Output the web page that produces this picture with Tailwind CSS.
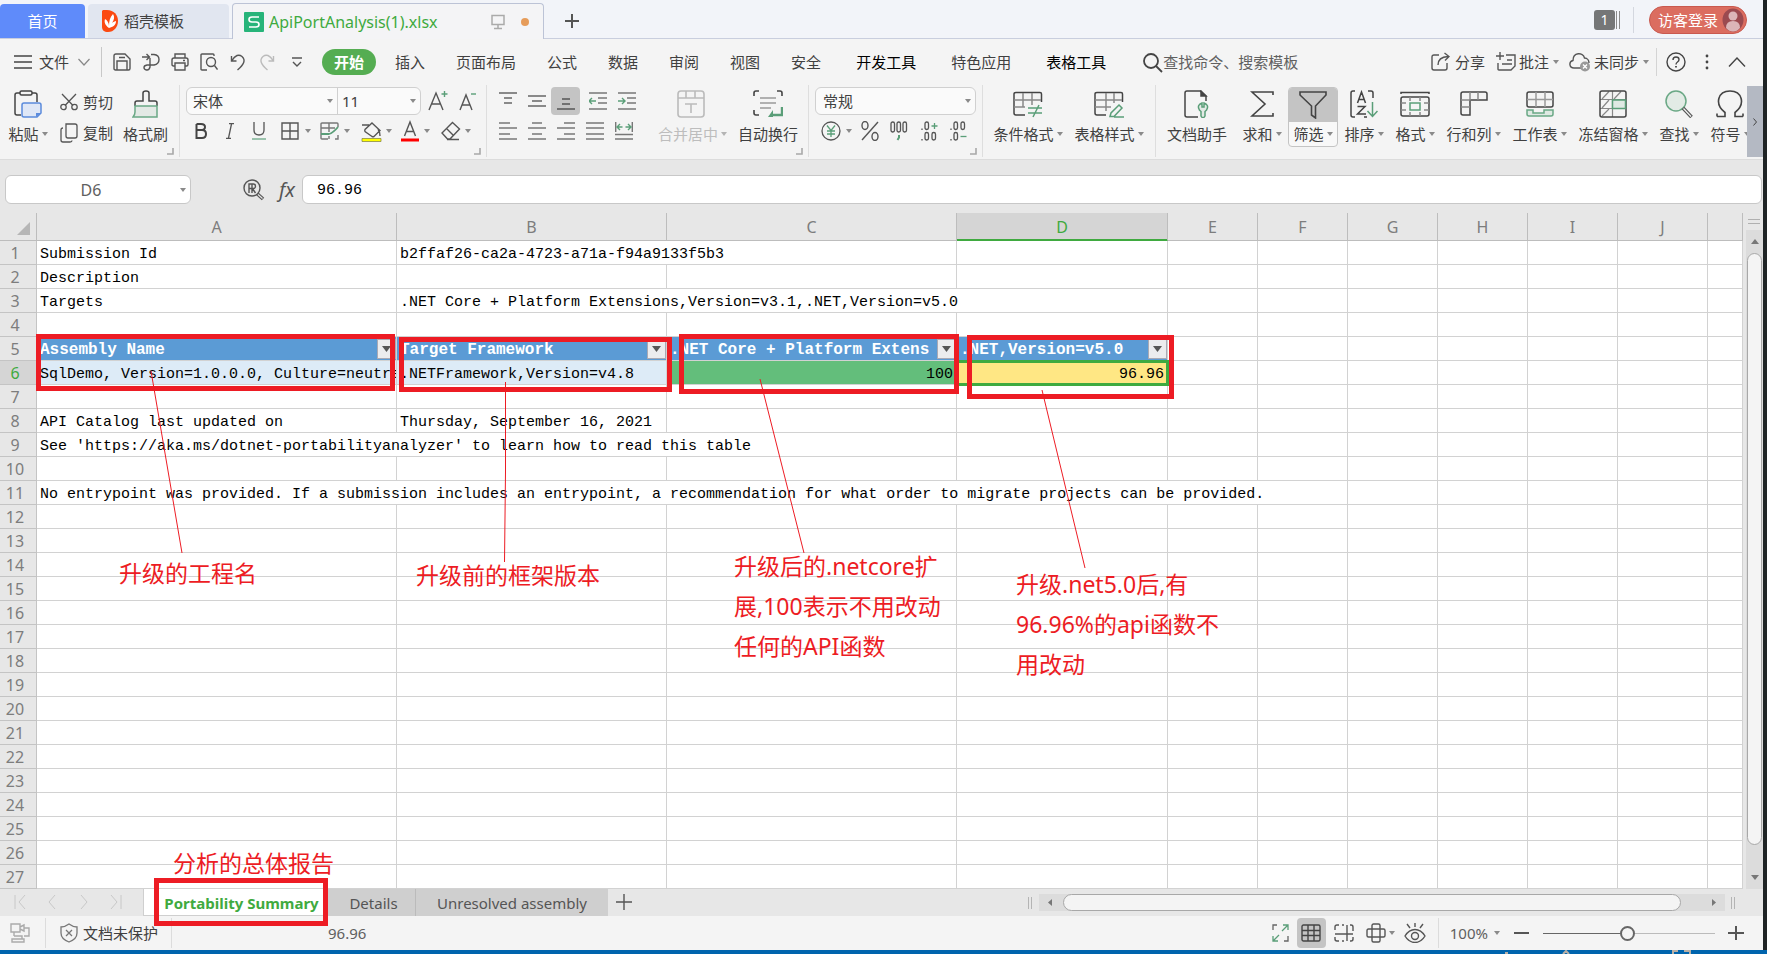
<!DOCTYPE html>
<html lang="zh-CN">
<head>
<meta charset="utf-8">
<title>ApiPortAnalysis(1).xlsx</title>
<script src="https://cdn.jsdelivr.net/npm/@tailwindcss/browser@4"></script>
</head>
<body class="flex h-screen flex-col overflow-hidden bg-[#0064ad] font-['Noto_Sans','Noto_Sans_CJK_SC',sans-serif] text-[15px] leading-5 text-[#404040]">
<svg class="hidden">
  <symbol id="caret" viewBox="0 0 6 4"><path d="M0 0h6L3 4z" fill="#8a8a8a"/></symbol>
  <symbol id="corner" viewBox="0 0 7 7"><path d="M6 0v6H0" fill="none" stroke="#a8a8a8" stroke-width="1.6"/></symbol>
</svg>

<div class="flex min-h-0 flex-1 bg-[#1f2425] pr-1">
<div class="relative flex min-w-0 flex-1 flex-col bg-[#f4f4f4]">

  <!-- Document tabs -->
  <header class="flex h-[39px] shrink-0 items-end border-b border-[#c9cede] bg-[#f2f4f9]">
    <button class="h-[34px] w-[85px] rounded-t bg-[#5f8bfa] text-white">首页</button>
    <button class="ml-[3px] flex h-[34px] w-[141px] items-center gap-[6px] rounded-t bg-[#e1e6f0] pl-[14px]">
      <svg class="h-[22px] w-4" viewBox="0 0 16 22"><path d="M1 0h4c7 0 11 5 11 11s-4 11-10 11C2 22 0 20 0 17V1z" fill="#fb4a12"/><path d="M7 18C3 15 2 12 3 9c2 1 4 4 4 7 0-5 1-9 4-12 2 3 1 6-1 9 1-1 3-2 4-2 0 4-3 6-7 7z" fill="#fff"/></svg>
      <span>稻壳模板</span>
    </button>
    <div class="-mb-px ml-[3px] flex h-[36px] w-[312px] items-center rounded-t border border-b-0 border-[#bcc3d6] bg-[#f4f4f6] pl-[11px] text-base text-[#3faa40]">
      <svg class="h-5 w-5" viewBox="0 0 20 20"><rect width="20" height="20" rx="1" fill="#27b47a"/><path d="M15 5H8Q5 5 5 7.500T8 10h4q3 0 3 2.500T12 15H5" fill="none" stroke="#fff" stroke-width="1.600"/></svg>
      <span class="ml-[5px] w-[222px]">ApiPortAnalysis(1).xlsx</span>
      <svg class="h-4 w-[14px]" viewBox="0 0 14 16" fill="none" stroke="#aaa" stroke-width="1.500"><path d="M1 1.500h12v9H1zM7 11v3M3 14.500h8"/></svg>
      <span class="ml-4 h-2 w-2 rounded-full bg-[#e69c5a]"></span>
    </div>
    <button class="ml-5 h-[34px] w-4" aria-label="新建标签"><svg class="h-4 w-4" viewBox="0 0 16 16" stroke="#555" stroke-width="2"><path d="M8 1v14M1 8h14"/></svg></button>
    <div class="ml-auto flex h-full items-center pr-4 pt-0.5">
      <span class="h-5 w-[21px] rounded-[3px] bg-[#757677] text-center text-sm leading-5 text-white">1</span>
      <span class="ml-px h-[18px] w-1 border-x border-[#8a8a8a]"></span>
      <span class="ml-[13px] h-[26px] w-px bg-[#d4d7df]"></span>
      <button class="ml-[15px] flex h-[28px] w-[98px] items-center rounded-full border border-[#c9594f] bg-[#db6d60] pl-2 text-white">
        <span class="whitespace-nowrap">访客登录</span>
        <svg class="ml-1 h-6 w-[22px] shrink-0" viewBox="0 0 22 24"><ellipse cx="11" cy="12" rx="10.500" ry="11.500" fill="#9b4a50"/><circle cx="11" cy="8" r="4.500" fill="#dbb5b8"/><path d="M4 20q0-7 7-7t7 7q-3 3.500-7 3.500T4 20z" fill="#dbb5b8"/></svg>
      </button>
    </div>
  </header>

  <!-- Menu bar -->
  <nav class="flex h-[46px] shrink-0 items-center whitespace-nowrap pl-[14px]">
    <button class="flex items-center"><svg class="h-4 w-[18px]" viewBox="0 0 18 16" stroke="#444" stroke-width="1.400"><path d="M0 2h18M0 8h18M0 14h18"/></svg><span class="ml-[7px]">文件</span>
    <svg class="ml-[9px] h-2 w-3" viewBox="0 0 12 8" fill="none" stroke="#888" stroke-width="1.200"><path d="M.5 1L6 7l5.500-6"/></svg></button>
    <span class="ml-[11px] h-[30px] w-px bg-[#c8c8c8]"></span>
    <div class="ml-[11px] flex gap-[11px]">
      <button aria-label="保存"><svg class="h-[18px] w-[18px]" viewBox="0 0 18 18" fill="none" stroke="#555" stroke-width="1.400"><path d="M3 1h9l5 5v9.500q0 1.500-1.500 1.500h-13Q1 17 1 15.500V3q0-2 2-2zM4 17V8h10v9M6 4.500h6"/></svg></button>
      <button aria-label="输出为PDF"><svg class="h-[18px] w-[18px]" viewBox="0 0 18 18" fill="none" stroke="#555" stroke-width="1.400"><path d="M0 4h7M4.500 1L7.500 4l-3 3M9 1.500h3Q17 2 17 6.500T12 12H5q-3 .5-3 2.500T4.500 17 8 14V5"/></svg></button>
      <button aria-label="打印"><svg class="h-[18px] w-[18px]" viewBox="0 0 18 18" fill="none" stroke="#555" stroke-width="1.400"><path d="M4 5V1h10v4M4 13H2.500Q1 13 1 11.500V7q0-2 2-2h12q2 0 2 2v4.500q0 1.500-1.500 1.500H14M4 10h10v7H4zM12 7.500h2"/></svg></button>
      <button aria-label="打印预览"><svg class="h-[18px] w-[18px]" viewBox="0 0 18 18" fill="none" stroke="#555" stroke-width="1.400"><path d="M7 17H2q-1 0-1-1V2q0-1 1-1h11q1 0 1 1v1M14.500 12.500l3 4"/><circle cx="11" cy="9" r="4.500"/></svg></button>
      <button aria-label="撤销"><svg class="h-[18px] w-[18px]" viewBox="0 0 18 18" fill="none" stroke="#555" stroke-width="1.400"><path d="M2.500 3v5h5M3 7.500C6 2 10 1 13 3.500c4 3.500 2 8-4.500 13.500"/></svg></button>
      <button aria-label="恢复"><svg class="h-[18px] w-[18px]" viewBox="0 0 18 18" fill="none" stroke="#bbb" stroke-width="1.400"><path d="M15.500 3v5h-5M15 7.500C12 2 8 1 5 3.500 1 7 3 11.500 9.500 17"/></svg></button>
    </div>
    <button class="ml-[16px]" aria-label="更多"><svg class="h-3 w-[10px]" viewBox="0 0 10 12" fill="none" stroke="#555" stroke-width="1.400"><path d="M0 2h10M1 6l4 4 4-4"/></svg></button>
    <button class="ml-5 h-[26px] w-[54px] rounded-full bg-[#55ad52] font-bold text-white">开始</button>
    <div class="ml-[19px] flex gap-[31px]"><a href="#">插入</a><a href="#">页面布局</a><a href="#">公式</a><a href="#">数据</a><a href="#">审阅</a><a href="#">视图</a><a href="#">安全</a></div>
    <div class="ml-[35px] flex gap-[35px]"><a href="#" class="text-black">开发工具</a><a href="#">特色应用</a><a href="#" class="text-black">表格工具</a></div>
    <label class="ml-[37px] flex items-center">
      <svg class="h-[21px] w-5" viewBox="0 0 20 21" fill="none" stroke="#444" stroke-width="1.800"><circle cx="8" cy="9" r="7"/><path d="M13 14l6 6"/></svg>
      <input class="w-[150px] bg-transparent outline-none placeholder:text-[#606060]" placeholder="查找命令、搜索模板">
    </label>
    <div class="ml-auto flex items-center pr-[17px]">
      <button class="flex items-center gap-[5px]"><svg class="h-5 w-[19px]" viewBox="0 0 19 20" fill="none" stroke="#555" stroke-width="1.400"><path d="M8 3H3Q1 3 1 5v11q0 2 2 2h11q2 0 2-2v-5M7 13q0-8 10-8.500M13.500 1L18 4.500l-4 4"/></svg>分享</button>
      <button class="ml-[11px] flex items-center gap-[3px]"><svg class="h-5 w-5" viewBox="0 0 20 20" fill="none" stroke="#555" stroke-width="1.400"><path d="M4 0v8M0 4h8M10 3h9v11l-4 4H3q-1 0-1-1v-6M11 8h5M6 12h10"/></svg>批注<svg class="ml-px h-1 w-1.5"><use href="#caret"/></svg></button>
      <button class="ml-[10px] flex items-center gap-[3px]"><svg class="h-5 w-[22px]" viewBox="0 0 22 20" fill="none" stroke="#555" stroke-width="1.400"><path d="M12 16H5C0 16-.5 9.500 4 8.500 4 0 14 0 15.500 6c3 0 4.500 2.500 4.500 5"/><circle cx="16" cy="14.500" r="5" fill="#999" stroke="none"/><path d="M14 12.500l4 4M18 12.500l-4 4" stroke="#fff"/></svg>未同步<svg class="ml-px h-1 w-1.5"><use href="#caret"/></svg></button>
      <span class="ml-[7px] h-[28px] w-px bg-[#d4d4d4]"></span>
      <button class="ml-[9px]" aria-label="帮助"><svg class="h-5 w-5" viewBox="0 0 20 20" fill="none" stroke="#444" stroke-width="1.400"><circle cx="10" cy="10" r="9"/><path d="M7 8q0-3 3-3t3 2.500Q13 9 11.500 10T10 12.500"/><path d="M10 14v1.500" stroke-width="1.800"/></svg></button>
      <button class="ml-[19px]" aria-label="更多选项"><svg class="h-4 w-1" viewBox="0 0 4 16" fill="#444"><circle cx="2" cy="2" r="1.400"/><circle cx="2" cy="8" r="1.400"/><circle cx="2" cy="14" r="1.400"/></svg></button>
      <button class="ml-[19px]" aria-label="收起功能区"><svg class="h-[10px] w-[18px]" viewBox="0 0 18 10" fill="none" stroke="#444" stroke-width="1.400"><path d="M1 9.500L9 1l8 8.500"/></svg></button>
    </div>
  </nav>

  <!-- Ribbon -->
  <section class="flex h-[74px] shrink-0 whitespace-nowrap">
    <!-- clipboard -->
    <div class="relative flex h-[72px] w-[180px] shrink-0 border-r border-[#dedede] pl-2">
      <button class="flex w-10 flex-col items-center pt-[5px]">
        <svg class="h-7 w-7" viewBox="0 0 28 28" fill="none" stroke="#444" stroke-width="1.500"><path d="M6 3H3Q1 3 1 5v18q0 2 2 2h4M18 3h3q2 0 2 2v7"/><rect x="6" y="1" width="12" height="4" rx="1.500"/><path d="M10 13h15q2 0 2 2v8l-4 4H10q-2 0-2-2V15q0-2 2-2z" fill="#dfe7f6" stroke="#5b8bdc"/><path d="M22 27v-4h5z" fill="#5b8bdc" stroke="none"/></svg>
        <span class="mt-1.5 flex items-center gap-[3px]">粘贴<svg class="h-1 w-1.5"><use href="#caret"/></svg></span>
      </button>
      <div class="ml-3 flex w-[54px] flex-col pt-[2px]">
        <button class="flex h-[29px] items-center gap-[5px]"><svg class="h-[18px] w-[18px] shrink-0" viewBox="0 0 18 18" fill="none" stroke="#555" stroke-width="1.300"><path d="M2 1l11 11.500M16 1L5 12.500"/><circle cx="3.500" cy="14" r="2.700"/><circle cx="14.500" cy="14" r="2.700"/></svg>剪切</button>
        <button class="mt-[2px] flex h-[29px] items-center gap-[5px]"><svg class="h-5 w-[18px] shrink-0" viewBox="0 0 18 20" fill="none" stroke="#555" stroke-width="1.300"><path d="M6 1h9q2 0 2 2v10q0 2-2 2H8q-2 0-2-2zM3 5Q1 5 1 7v10q0 2 2 2h7q2 0 2-1.500"/></svg>复制</button>
      </div>
      <button class="ml-[9px] flex w-[45px] flex-col items-center pt-[5px]">
        <svg class="h-7 w-7" viewBox="0 0 28 28" fill="none" stroke="#444" stroke-width="1.500"><path d="M3 16v-3q0-2 2-2h6V3q0-2 3-2t3 2v8h6q2 0 2 2v3"/><path d="M3 16h22v11H1q2-2 2-5z" fill="#e3e9e5" stroke="#6aa885"/></svg>
        <span class="mt-1.5">格式刷</span>
      </button>
      <svg class="absolute bottom-[2px] right-[5px] h-[7px] w-[7px]"><use href="#corner"/></svg>
    </div>

    <!-- font -->
    <div class="relative flex h-[72px] w-[307px] shrink-0 flex-col border-r border-[#dedede] pl-1.5 pt-[2px]">
      <div class="flex items-center">
        <div class="flex h-7 w-[235px] items-center rounded-md border border-[#d0d0d0] bg-[#fafafa]">
          <select aria-label="字体" class="w-[140px] appearance-none bg-transparent pl-1.5 outline-none"><option>宋体</option></select>
          <svg class="h-1 w-1.5"><use href="#caret"/></svg>
          <span class="ml-1 h-full w-px bg-[#d0d0d0]"></span>
          <select aria-label="字号" class="w-[72px] appearance-none bg-transparent pl-1 outline-none"><option>11</option></select>
          <svg class="h-1 w-1.5"><use href="#caret"/></svg>
        </div>
        <button class="ml-[7px]" aria-label="增大字号"><svg class="h-5 w-5" viewBox="0 0 20 20" fill="none" stroke="#555" stroke-width="1.400"><path d="M1 19L8 2l7 17M3.500 13h9"/><path d="M16.500 0v6M13.500 3h6" stroke="#5a9e78"/></svg></button>
        <button class="ml-[10px]" aria-label="减小字号"><svg class="h-5 w-5" viewBox="0 0 20 20" fill="none" stroke="#555" stroke-width="1.400"><path d="M2 19L8 4l6 15M4 14h8"/><path d="M13 3h5" stroke="#5a9e78"/></svg></button>
      </div>
      <div class="mt-[2px] flex h-7 items-center">
        <button class="flex w-[29px] justify-center" aria-label="加粗"><svg class="h-4 w-3" viewBox="0 0 12 16" fill="none" stroke="#444" stroke-width="2"><path d="M1.500 1v14H7q4 0 4-4t-4-4H1.500M1.500 1H6q4 0 4 3T6 7"/></svg></button>
        <button class="flex w-[29px] justify-center" aria-label="倾斜"><svg class="h-4 w-2" viewBox="0 0 8 16" fill="none" stroke="#555" stroke-width="1.300"><path d="M3 .7h5M0 15.300h5M5.500 1l-3 14"/></svg></button>
        <button class="flex w-[29px] justify-center" aria-label="下划线"><svg class="h-[18px] w-[14px]" viewBox="0 0 14 18" fill="none" stroke="#555" stroke-width="1.300"><path d="M2 0v8q0 5 5 5t5-5V0"/><path d="M0 17h14" stroke="#6aa885"/></svg></button>
        <button class="ml-2 flex w-[39px] items-center gap-[6px]" aria-label="边框"><svg class="h-[18px] w-[18px]" viewBox="0 0 18 18" fill="none" stroke="#555" stroke-width="1.400"><path d="M1 1h16v16H1zM9 1v16M1 9h16"/></svg><svg class="h-1 w-1.5"><use href="#caret"/></svg></button>
        <button class="flex w-[41px] items-center gap-[4px]" aria-label="绘图边框"><svg class="h-[18px] w-5 shrink-0" viewBox="0 0 20 18" fill="none" stroke="#777" stroke-width="1.400"><path d="M8 17H2q-1 0-1-1V2q0-1 1-1h15q1 0 1 1v3M1 6h14M9 1v9M15 17h3v-4M9 14v3"/><path d="M1 12h8q4-1 9-7" stroke="#5a9e78" stroke-width="1.800"/></svg><svg class="h-1 w-1.5"><use href="#caret"/></svg></button>
        <button class="flex w-10 items-center gap-[4px]" aria-label="填充颜色"><svg class="h-[22px] w-[21px] shrink-0" viewBox="0 0 21 22" fill="none" stroke="#555" stroke-width="1.400"><path d="M11 3l8 7.500-6 6q-1 .500-2 0l-7-5q-.5-1 0-2L11 3zM1 5h7M17 9q2 3 2 7"/><path d="M1 18.500h19v3H1z" fill="#ff0" stroke="#8a8a4a" stroke-width=".8"/></svg><svg class="h-1 w-1.5"><use href="#caret"/></svg></button>
        <button class="flex w-10 items-center gap-[5px]" aria-label="字体颜色"><svg class="h-[22px] w-[18px]" viewBox="0 0 18 22" fill="none" stroke="#555" stroke-width="1.400"><path d="M3.500 16L9 2l5.500 14M5.500 11.500h7"/><path d="M0 20h18" stroke="#f00" stroke-width="3"/></svg><svg class="h-1 w-1.5"><use href="#caret"/></svg></button>
        <button class="flex w-8 items-center gap-[4px]" aria-label="清除"><svg class="h-5 w-5 shrink-0" viewBox="0 0 20 20" fill="none" stroke="#555" stroke-width="1.400"><path d="M11.500 1.500l7 6.500L9 18H6.500L1 12zM5.500 7.500l7 7M6 18.500h12"/></svg><svg class="h-1 w-1.5"><use href="#caret"/></svg></button>
      </div>
      <svg class="absolute bottom-[2px] right-[5px] h-[7px] w-[7px]"><use href="#corner"/></svg>
    </div>

    <!-- alignment -->
    <div class="relative flex h-[72px] w-[322px] shrink-0 border-r border-[#dedede] pl-1.5">
      <div class="flex w-[148px] flex-col pt-[2px]">
        <div class="flex h-7 items-center">
          <button class="flex w-[29px] justify-center" aria-label="顶端对齐"><svg class="h-[18px] w-[18px]" viewBox="0 0 18 18" stroke="#666" stroke-width="1.400"><path d="M0 1h18M5 6h8M5 11h8"/></svg></button>
          <button class="flex w-[29px] justify-center" aria-label="垂直居中"><svg class="h-[18px] w-[18px]" viewBox="0 0 18 18" stroke="#666" stroke-width="1.400"><path d="M0 4h18M4 9h10M0 14h18"/></svg></button>
          <button class="flex h-7 w-[29px] items-center justify-center rounded bg-[#c4c4c4]" aria-label="底端对齐"><svg class="h-[18px] w-[18px]" viewBox="0 0 18 18" stroke="#555" stroke-width="1.400"><path d="M5 7h8M5 12h8M0 17h18"/></svg></button>
          <button class="ml-[3px] flex w-[29px] justify-center" aria-label="减少缩进"><svg class="h-[18px] w-[18px]" viewBox="0 0 18 18" fill="none" stroke="#777" stroke-width="1.400"><path d="M0 1h18M9 6h9M9 11h9M0 17h18"/><path d="M0 9h7M3 6L0 9l3 3" stroke="#5a9e78"/></svg></button>
          <button class="flex w-[29px] justify-center" aria-label="增加缩进"><svg class="h-[18px] w-[18px]" viewBox="0 0 18 18" fill="none" stroke="#777" stroke-width="1.400"><path d="M0 1h18M9 6h9M9 11h9M0 17h18"/><path d="M0 9h7M4 6l3 3-3 3" stroke="#5a9e78"/></svg></button>
        </div>
        <div class="mt-[2px] flex h-7 items-center">
          <button class="flex w-[29px] justify-center" aria-label="左对齐"><svg class="h-[18px] w-[18px]" viewBox="0 0 18 18" stroke="#777" stroke-width="1.400"><path d="M0 1h11M0 6h18M0 12h11M0 17h18"/></svg></button>
          <button class="flex w-[29px] justify-center" aria-label="水平居中"><svg class="h-[18px] w-[18px]" viewBox="0 0 18 18" stroke="#777" stroke-width="1.400"><path d="M4 1h10M0 6h18M4 12h10M0 17h18"/></svg></button>
          <button class="flex w-[29px] justify-center" aria-label="右对齐"><svg class="h-[18px] w-[18px]" viewBox="0 0 18 18" stroke="#777" stroke-width="1.400"><path d="M7 1h11M0 6h18M7 12h11M0 17h18"/></svg></button>
          <button class="flex w-[29px] justify-center" aria-label="两端对齐"><svg class="h-[18px] w-[18px]" viewBox="0 0 18 18" stroke="#777" stroke-width="1.400"><path d="M0 1h18M0 6h18M0 12h18M0 17h18"/></svg></button>
          <button class="flex w-[29px] justify-center" aria-label="分散对齐"><svg class="h-[18px] w-[18px]" viewBox="0 0 18 18" fill="none" stroke="#777" stroke-width="1.400"><path d="M.7 0v10M17.300 0v10M0 12.500h18M0 17h18"/><path d="M2 5h5.500M5 2L2 5l3 3M16 5h-5.500M13 2l3 3-3 3" stroke="#5a9e78"/></svg></button>
        </div>
      </div>
      <button class="ml-[17px] flex w-[70px] flex-col pt-[5px] text-[#bdbdbd]">
        <svg class="ml-[19px] h-7 w-7" viewBox="0 0 28 28" fill="none" stroke="#bbb" stroke-width="1.600"><rect x="1" y="1" width="26" height="26" rx="3"/><path d="M1 8h26M9 1v7M18 1v7M8 14h12M14 14v9"/></svg>
        <span class="mt-1.5 flex items-center gap-[3px]">合并居中<svg class="h-1 w-1.5 opacity-60"><use href="#caret"/></svg></span>
      </button>
      <button class="ml-[10px] flex w-[60px] flex-col items-center pt-[5px]">
        <svg class="h-7 w-[30px]" viewBox="0 0 30 28" fill="none" stroke="#444" stroke-width="1.600"><path d="M1 6V3q0-2 2-2h3M24 1h3q2 0 2 2v3M1 20v3q0 2 2 2h3"/><path d="M7 8h16M7 13h16M7 18h11" stroke="#999"/><path d="M29 17v8H18" stroke="#5a9e78" stroke-width="2.400"/><path d="M20 20v7h-5z" fill="#5a9e78" stroke="none"/></svg>
        <span class="mt-1.5">自动换行</span>
      </button>
      <svg class="absolute bottom-[2px] right-[5px] h-[7px] w-[7px]"><use href="#corner"/></svg>
    </div>

    <!-- number -->
    <div class="relative flex h-[72px] w-[174px] shrink-0 flex-col border-r border-[#dedede] pl-1.5 pt-[2px]">
      <div class="flex h-7 w-[161px] items-center rounded-md border border-[#d0d0d0] bg-[#fafafa]">
        <select aria-label="数字格式" class="w-[149px] appearance-none bg-transparent pl-[7px] outline-none"><option>常规</option></select>
        <svg class="h-1 w-1.5"><use href="#caret"/></svg>
      </div>
      <div class="mt-[2px] flex h-7 items-center pl-[6px]">
        <button class="flex w-10 items-center gap-[5px]" aria-label="货币格式"><svg class="h-5 w-5" viewBox="0 0 20 20" fill="none" stroke="#555" stroke-width="1.300"><circle cx="10" cy="10" r="9"/><path d="M6 4.500l4 5 4-5M10 9.500V16M6 10h8M6 13h8" stroke="#5a9e78"/></svg><svg class="h-1 w-1.5"><use href="#caret"/></svg></button>
        <button class="w-[29px]" aria-label="百分比"><svg class="h-5 w-[18px]" viewBox="0 0 18 20" fill="none" stroke="#555" stroke-width="1.400"><ellipse cx="4" cy="4.500" rx="3" ry="4"/><ellipse cx="14" cy="15.500" rx="3" ry="4"/><path d="M17 1L1 19"/></svg></button>
        <button class="w-[31px]" aria-label="千位分隔"><svg class="h-5 w-[18px]" viewBox="0 0 18 20" fill="none" stroke="#555" stroke-width="1.300"><rect x="1" y="1" width="3.500" height="10" rx="1.700"/><rect x="7" y="1" width="3.500" height="10" rx="1.700"/><rect x="13" y="1" width="3.500" height="10" rx="1.700"/><path d="M9 14v2.500L7.500 19" stroke="#5a9e78" stroke-width="2"/></svg></button>
        <button class="w-[29px]" aria-label="增加小数位"><svg class="h-5 w-[18px]" viewBox="0 0 18 20" fill="none" stroke="#555" stroke-width="1.300"><rect x="4" y="1" width="3.500" height="7.500" rx="1.700"/><rect x="4" y="11.500" width="3.500" height="7.500" rx="1.700"/><rect x="11" y="11.500" width="3.500" height="7.500" rx="1.700"/><path d="M1 7.500v1.500M1 18v1.500"/><path d="M13.500 2v6M10.500 5h6" stroke="#5a9e78"/></svg></button>
        <button class="w-[18px]" aria-label="减少小数位"><svg class="h-5 w-[18px]" viewBox="0 0 18 20" fill="none" stroke="#555" stroke-width="1.300"><rect x="4" y="1" width="3.500" height="7.500" rx="1.700"/><rect x="11" y="1" width="3.500" height="7.500" rx="1.700"/><rect x="4" y="11.500" width="3.500" height="7.500" rx="1.700"/><path d="M1 7.500v1.500M1 18v1.500"/><path d="M10.500 15.500h6" stroke="#5a9e78"/></svg></button>
      </div>
      <svg class="absolute bottom-[2px] right-[5px] h-[7px] w-[7px]"><use href="#corner"/></svg>
    </div>

    <!-- styles -->
    <div class="flex h-[72px] w-[173px] shrink-0 gap-[11px] border-r border-[#dedede] pl-[10px]">
      <button class="flex w-[70px] flex-col items-center pt-[5px]">
        <svg class="h-7 w-[30px]" viewBox="0 0 30 28" fill="none" stroke="#444" stroke-width="1.500"><path d="M12 25H3q-2 0-2-2V4q0-1.500 2-1.500h24q1.500 0 1.500 1.500v8"/><path d="M1 10h27M1 17h11M10 3v14M19 3v12" stroke="#888"/><path d="M15 18h14M15 23h14M26 15l-6 12" stroke="#5a9e78"/></svg>
        <span class="mt-1.5 flex items-center gap-[3px]">条件格式<svg class="h-1 w-1.5"><use href="#caret"/></svg></span>
      </button>
      <button class="flex w-[70px] flex-col items-center pt-[5px]">
        <svg class="h-7 w-[30px]" viewBox="0 0 30 28" fill="none" stroke="#444" stroke-width="1.500"><path d="M12 25H3q-2 0-2-2V4q0-1.500 2-1.500h24q1.500 0 1.500 1.500v8"/><path d="M1 10h27M1 17h16M12 3v18M20 3v10" stroke="#888"/><path d="M25 15l3 3-8 8.500h-4L17 23zM20 27h10" stroke="#5a9e78"/></svg>
        <span class="mt-1.5 flex items-center gap-[3px]">表格样式<svg class="h-1 w-1.5"><use href="#caret"/></svg></span>
      </button>
    </div>

    <!-- editing -->
    <div class="flex h-[72px] min-w-0 flex-1 gap-[11px] overflow-hidden pl-[11px]">
      <button class="flex w-[60px] shrink-0 flex-col items-center pt-[5px]">
        <svg class="h-7 w-7" viewBox="0 0 28 28" fill="none" stroke="#444" stroke-width="1.500"><path d="M15 27H4q-2 0-2-2V3q0-2 2-2h13l6 5v5"/><path d="M18 1v5h5z" fill="#444"/><path d="M19 13q-5 2-3 6 0 1 2 2.500V26q2 3.500 4 0v-4.500q2-1.500 2-2.500 2-4-3-6v4h-2z" fill="#e3e9e5" stroke="#5a9e78"/></svg>
        <span class="mt-1.5">文档助手</span>
      </button>
      <button class="ml-1 flex w-10 shrink-0 flex-col items-center pt-[5px]">
        <svg class="h-7 w-6" viewBox="0 0 24 28" fill="none" stroke="#444" stroke-width="1.600"><path d="M23 5V2H2l13 12L2 26h21v-3"/></svg>
        <span class="mt-1.5 flex items-center gap-[3px]">求和<svg class="h-1 w-1.5"><use href="#caret"/></svg></span>
      </button>
      <button class="-mx-[5px] mt-[2px] flex h-[60px] w-[50px] shrink-0 flex-col items-center overflow-hidden rounded border border-[#c4c4c4] bg-[#f8f8f8]">
        <span class="flex h-[34px] w-full shrink-0 justify-center bg-[#c4c4c4] pt-[3px]"><svg class="h-7 w-7" viewBox="0 0 28 28" fill="none" stroke="#444" stroke-width="1.600"><path d="M1 1h26v3L16.500 15v12l-4-3v-9L1 4z"/></svg></span>
        <span class="mt-[2px] flex items-center gap-[3px]">筛选<svg class="h-1 w-1.5"><use href="#caret"/></svg></span>
      </button>
      <button class="flex w-10 shrink-0 flex-col items-center pt-[5px]">
        <svg class="h-7 w-7" viewBox="0 0 28 28" fill="none" stroke="#444" stroke-width="1.500"><path d="M5 27H3q-2 0-2-2V3q0-2 2-2h2M18 1h3q2 0 2 2v5M14 27h3M7.500 13L11.500 2l4 11M9 9.500h5M7.500 16.500H15l-7.500 7.500H16"/><path d="M22.500 12v14M17.500 21l5 5.500 5-5.500" stroke="#5a9e78"/></svg>
        <span class="mt-1.5 flex items-center gap-[3px]">排序<svg class="h-1 w-1.5"><use href="#caret"/></svg></span>
      </button>
      <button class="flex w-10 shrink-0 flex-col items-center pt-[5px]">
        <svg class="h-7 w-[30px]" viewBox="0 0 30 28" fill="none" stroke="#444" stroke-width="1.500"><path d="M1 4V2.500h28V4"/><rect x="1" y="7" width="28" height="19" rx="2"/><path d="M1 13h5M24 13h5M1 20h5M24 20h5M10 7v4M20 7v4M10 22v4M20 22v4" stroke="#888"/><rect x="10" y="13" width="10" height="7" stroke="#5a9e78"/></svg>
        <span class="mt-1.5 flex items-center gap-[3px]">格式<svg class="h-1 w-1.5"><use href="#caret"/></svg></span>
      </button>
      <button class="flex w-[55px] shrink-0 flex-col items-center pt-[5px]">
        <svg class="h-7 w-7" viewBox="0 0 28 28" fill="none" stroke="#444" stroke-width="1.500"><path d="M1 4q0-2 2-2h22q2 0 2 2v6H10v15H3q-2 0-2-2z"/><path d="M10 2v8H1M18 2v8M1 17h9" stroke="#888"/></svg>
        <span class="mt-1.5 flex items-center gap-[3px]">行和列<svg class="h-1 w-1.5"><use href="#caret"/></svg></span>
      </button>
      <button class="flex w-[55px] shrink-0 flex-col items-center pt-[5px]">
        <svg class="h-7 w-7" viewBox="0 0 28 28" fill="none" stroke="#444" stroke-width="1.500"><rect x="1" y="2" width="26" height="15" rx="2"/><path d="M1 9.500h26M10 2v15M19 2v15" stroke="#999"/><path d="M1 20h6v3h11v-3h9v4q0 2-2 2H3q-2 0-2-2z" fill="#dfe9e3" stroke="#6aa885"/></svg>
        <span class="mt-1.5 flex items-center gap-[3px]">工作表<svg class="h-1 w-1.5"><use href="#caret"/></svg></span>
      </button>
      <button class="flex w-[70px] shrink-0 flex-col items-center pt-[5px]">
        <svg class="h-7 w-7" viewBox="0 0 28 28" fill="none" stroke="#444" stroke-width="1.500"><path d="M1 9.500h26M13.500 1v26M13.500 18.500h13M1 18.500h12M3 9l7-7.500M15 9l7-7.500M3 18l7-8M3 26l7-7" stroke="#888" stroke-width="1.200"/><rect x="1" y="1" width="26" height="26" rx="2"/><path d="M13.500 10h13v8.500h-13z" fill="#dfe9e3" stroke="#5a9e78"/></svg>
        <span class="mt-1.5 flex items-center gap-[3px]">冻结窗格<svg class="h-1 w-1.5"><use href="#caret"/></svg></span>
      </button>
      <button class="flex w-10 shrink-0 flex-col items-center pt-[5px]">
        <svg class="h-7 w-7" viewBox="0 0 28 28" fill="none" stroke="#555" stroke-width="1.500"><circle cx="11" cy="11" r="10" fill="#e2ebe5" stroke="#6aa885"/><path d="M18 18l8.500 9" stroke-width="3.600"/><path d="M18.500 18.500l7.500 8" stroke="#f4f4f4" stroke-width="1.200"/></svg>
        <span class="mt-1.5 flex items-center gap-[3px]">查找<svg class="h-1 w-1.5"><use href="#caret"/></svg></span>
      </button>
      <button class="flex w-10 shrink-0 flex-col items-center pt-[5px]">
        <svg class="h-7 w-7" viewBox="0 0 28 28" fill="none" stroke="#444" stroke-width="1.600"><path d="M1 26.500h8v-4C-2 14 2 1 14 1s16 13 5 21.500v4h8M1 26.500v-3M27 26.500v-3"/></svg>
        <span class="mt-1.5 flex items-center gap-[3px]">符号<svg class="h-1 w-1.5"><use href="#caret"/></svg></span>
      </button>
    </div>
    <button class="mt-px flex h-[71px] w-4 shrink-0 items-center justify-center bg-[#b4b9c3]" aria-label="向右滚动"><svg class="h-2 w-1" viewBox="0 0 4 8" fill="none" stroke="#444"><path d="M.5.5L3.500 4l-3 3.500"/></svg></button>
  </section>

  <!-- Formula bar -->
  <section class="flex h-[54px] shrink-0 items-center border-t border-[#dcdcdc] bg-[#e7e7e7] pb-[3px] pl-[5px] pr-px pt-[9px]">
    <div class="flex h-[29px] w-[186px] shrink-0 items-center rounded-md border border-[#c8c8c8] bg-white">
      <input aria-label="名称框" value="D6" class="w-[174px] bg-transparent pr-1 text-center text-base text-[#606060] outline-none">
      <svg class="h-1 w-1.5"><use href="#caret"/></svg>
    </div>
    <button class="ml-[52px]" aria-label="查找引用"><svg class="h-[22px] w-[22px]" viewBox="0 0 22 22" fill="none" stroke="#555" stroke-width="1.400"><circle cx="9" cy="9" r="8"/><path d="M6 14V5h4.500q2 0 2 2.200t-2 2.300H6M9.500 9.500l3 4.500M9 5v9"/><path d="M14.500 15l5.500 5" stroke-width="3.600"/><path d="M15 15.500l4.500 4" stroke="#e7e7e7" stroke-width="1.200"/></svg></button>
    <button class="ml-[9px] h-7 w-[26px] italic text-[#555]" aria-label="插入函数"><span class="text-xl leading-6">fx</span></button>
    <input aria-label="编辑栏" value="96.96" class="ml-[2px] h-[29px] min-w-0 flex-1 rounded-md border border-[#c8c8c8] bg-white pl-[14px] pt-[2px] font-['Liberation_Mono',monospace] text-[15px] text-black outline-none">
  </section>

  <!-- Sheet -->
  <main class="flex min-h-0 flex-1 bg-[#e7e7e7]">
    <div class="min-w-0 flex-1">
    <table class="w-full table-fixed border-separate border-spacing-0 bg-white">
      <colgroup><col class="w-[37px]"><col class="w-[360px]"><col class="w-[270px]"><col class="w-[290px]"><col class="w-[211px]"><col class="w-[90px]"><col class="w-[90px]"><col class="w-[90px]"><col class="w-[90px]"><col class="w-[90px]"><col class="w-[90px]"><col></colgroup>
      <thead>
        <tr class="h-7 bg-[#e7e7e7] text-base text-[#7d7d7d] [&>th]:border-b [&>th]:border-r [&>th]:border-[#bdbdbd] [&>th]:p-0 [&>th]:font-normal">
          <th><svg class="ml-[17px] mt-1 h-[13px] w-[13px]" viewBox="0 0 13 13"><path d="M13 0v13H0z" fill="#b6b6b6"/></svg></th><th>A</th><th>B</th><th>C</th>
          <th class="bg-[#d5d5d5] text-[#3faa40] shadow-[inset_0_-1px_0_#3faa40] border-b-[#3faa40]!">D</th><th>E</th><th>F</th><th>G</th><th>H</th><th>I</th><th>J</th><th></th>
        </tr>
      </thead>
      <tbody id="rows" class="whitespace-nowrap font-['Liberation_Mono',monospace] text-[15px] leading-[18px] text-black [&_td]:overflow-hidden [&_td]:border-b [&_td]:border-r [&_td]:border-[#d2d2d2] [&_td]:p-0 [&_td]:pl-[3px] [&_td]:pt-1 [&_th]:border-b [&_th]:border-r [&_th]:border-[#c4c4c4] [&_th]:bg-[#e7e7e7] [&_th]:p-0 [&_th]:pr-[6px] [&_th]:font-['Noto_Sans',sans-serif] [&_th]:text-base [&_th]:font-normal [&_th]:leading-[22px] [&_th]:text-[#7d7d7d]">
        <tr class="h-6"><th>1</th><td>Submission Id</td><td colspan="2">b2ffaf26-ca2a-4723-a71a-f94a9133f5b3</td><td></td><td></td><td></td><td></td><td></td><td></td><td></td><td></td></tr>
        <tr class="h-6"><th>2</th><td>Description</td><td></td><td></td><td></td><td></td><td></td><td></td><td></td><td></td><td></td><td></td></tr>
        <tr class="h-6"><th>3</th><td>Targets</td><td colspan="3">.NET Core + Platform Extensions,Version=v3.1,.NET,Version=v5.0</td><td></td><td></td><td></td><td></td><td></td><td></td><td></td></tr>
        <tr class="h-6"><th>4</th><td></td><td></td><td></td><td></td><td></td><td></td><td></td><td></td><td></td><td></td><td></td></tr>
        <tr class="h-6 [&>td]:pt-0!"><th>5</th>
          <td class="bg-[#5b9bd5]"><div class="flex items-center justify-between text-base font-bold leading-[23px] text-white"><span class="pt-0.5 leading-5">Assembly Name</span><button class="flex h-5 w-[19px] items-center justify-center border border-[#a9a9b4] bg-[#ececee]" aria-label="筛选"><svg class="h-[6px] w-[9px]" viewBox="0 0 9 6"><path d="M0 0h9L4.500 6z" fill="#555"/></svg></button></div></td>
          <td class="bg-[#5b9bd5]"><div class="flex items-center justify-between text-base font-bold leading-[23px] text-white"><span class="pt-0.5 leading-5">Target Framework</span><button class="flex h-5 w-[19px] items-center justify-center border border-[#a9a9b4] bg-[#ececee]" aria-label="筛选"><svg class="h-[6px] w-[9px]" viewBox="0 0 9 6"><path d="M0 0h9L4.500 6z" fill="#555"/></svg></button></div></td>
          <td class="bg-[#5b9bd5]"><div class="flex items-center justify-between text-base font-bold leading-[23px] text-white"><span class="min-w-0 overflow-hidden pt-0.5 leading-5">.NET Core + Platform Extens</span><button class="flex h-5 w-[19px] shrink-0 items-center justify-center border border-[#a9a9b4] bg-[#ececee]" aria-label="筛选"><svg class="h-[6px] w-[9px]" viewBox="0 0 9 6"><path d="M0 0h9L4.500 6z" fill="#555"/></svg></button></div></td>
          <td class="bg-[#5b9bd5]"><div class="flex items-center justify-between text-base font-bold leading-[23px] text-white"><span class="pt-0.5 leading-5">.NET,Version=v5.0</span><button class="flex h-5 w-[19px] items-center justify-center border border-[#a9a9b4] bg-[#ececee]" aria-label="筛选"><svg class="h-[6px] w-[9px]" viewBox="0 0 9 6"><path d="M0 0h9L4.500 6z" fill="#555"/></svg></button></div></td>
          <td></td><td></td><td></td><td></td><td></td><td></td><td></td></tr>
        <tr class="h-6"><th class="bg-[#d5d5d5]! text-[#3faa40]!">6</th><td class="bg-[#ddebf7]">SqlDemo, Version=1.0.0.0, Culture=neutral</td><td class="bg-[#ddebf7]">.NETFramework,Version=v4.8</td><td class="bg-[#63be7b] pr-[3px]! text-right">100</td><td class="bg-[#ffe784] pr-[3px]! text-right outline-3 -outline-offset-2 outline-[#3faa40]">96.96</td><td></td><td></td><td></td><td></td><td></td><td></td><td></td></tr>
        <tr class="h-6"><th>7</th><td></td><td></td><td></td><td></td><td></td><td></td><td></td><td></td><td></td><td></td><td></td></tr>
        <tr class="h-6"><th>8</th><td>API Catalog last updated on</td><td>Thursday, September 16, 2021</td><td></td><td></td><td></td><td></td><td></td><td></td><td></td><td></td><td></td></tr>
        <tr class="h-6"><th>9</th><td colspan="3">See 'https://aka.ms/dotnet-portabilityanalyzer' to learn how to read this table</td><td></td><td></td><td></td><td></td><td></td><td></td><td></td><td></td></tr>
        <tr class="h-6"><th>10</th><td></td><td></td><td></td><td></td><td></td><td></td><td></td><td></td><td></td><td></td><td></td></tr>
        <tr class="h-6"><th>11</th><td colspan="6">No entrypoint was provided. If a submission includes an entrypoint, a recommendation for what order to migrate projects can be provided.</td><td></td><td></td><td></td><td></td><td></td></tr>
      </tbody>
    </table>
    </div>
    <!-- vertical scrollbar -->
    <div class="flex w-5 shrink-0 flex-col items-end">
      <div class="flex h-[17px] w-[17px] items-center pl-[2px]"><span class="h-[5px] w-3 border-y border-[#b0b0b0]"></span></div>
      <div class="flex w-[17px] flex-1 flex-col items-center bg-[#dcdcdc] pb-[9px] pt-[9px]">
        <svg class="h-[5px] w-2" viewBox="0 0 8 5"><path d="M4 0l4 5H0z" fill="#777"/></svg>
        <span class="mt-[9px] w-[15px] flex-1 rounded-full border border-[#a8a8a8] bg-[#f4f4f4]"></span>
        <svg class="mt-[30px] h-[5px] w-2" viewBox="0 0 8 5"><path d="M0 0h8L4 5z" fill="#777"/></svg>
      </div>
    </div>
  </main>

  <!-- Sheet tabs -->
  <section class="flex h-[27px] shrink-0 items-stretch bg-[#e7e7e7] text-[#555]">
    <div class="flex w-[143px] items-center gap-[18px] pb-[2px] pl-[14px]">
      <svg class="h-4 w-3" viewBox="0 0 12 16" fill="none" stroke="#c8c8c8"><path d="M1 1v14M11 1L5 8l6 7"/></svg>
      <svg class="ml-1 h-4 w-2" viewBox="0 0 8 16" fill="none" stroke="#c8c8c8"><path d="M7 1L1 8l6 7"/></svg>
      <svg class="ml-[6px] h-4 w-2" viewBox="0 0 8 16" fill="none" stroke="#c8c8c8"><path d="M1 1l6 7-6 7"/></svg>
      <svg class="ml-1 h-4 w-3" viewBox="0 0 12 16" fill="none" stroke="#c8c8c8"><path d="M11 1v14M1 1l6 7-6 7"/></svg>
    </div>
    <button class="w-[185px] border border-t-0 border-[#cfcfcf] bg-white pl-3 pt-0.5 font-bold text-[#3faa40]">Portability Summary</button>
    <button class="w-[88px] border-r border-[#bbb] bg-[#cfcfcf] pl-1">Details</button>
    <button class="w-[192px] bg-[#cfcfcf]">Unresolved assembly</button>
    <button class="ml-[8px] flex items-center pb-[2px]" aria-label="新建工作表"><svg class="h-4 w-4" viewBox="0 0 16 16" stroke="#555" stroke-width="1.400"><path d="M8 0v16M0 8h16"/></svg></button>
    <div class="ml-auto flex items-center pr-[28px]">
      <span class="h-3 w-1 border-x border-[#b4b4b4]"></span>
      <div class="ml-[7px] flex h-[17px] w-[686px] items-center bg-[#dcdcdc] px-[9px]">
        <svg class="h-[7px] w-1" viewBox="0 0 4 7"><path d="M4 0v7L0 3.500z" fill="#777"/></svg>
        <span class="ml-[11px] mr-[31px] h-[17px] flex-1 rounded-full border border-[#a8a8a8] bg-[#f4f4f4]"></span>
        <svg class="h-[7px] w-1" viewBox="0 0 4 7"><path d="M0 0v7l4-3.500z" fill="#777"/></svg>
      </div>
      <span class="ml-[6px] h-3 w-1 border-x border-[#b4b4b4]"></span>
    </div>
  </section>

  <!-- Status bar -->
  <footer class="flex h-[34px] shrink-0 items-center bg-[#f4f4f4] pl-[10px] pr-[19px]">
    <svg class="h-5 w-5" viewBox="0 0 20 20" fill="none" stroke="#aaa" stroke-width="1.400"><path d="M1 1h9v8H1zM10 4l4-2v6l-4-2M14 5h5v8h-5M4 9v4M2 19v-3h12v3zM4 13h8v3"/></svg>
    <span class="ml-[15px] h-[30px] w-px bg-[#dcdcdc]"></span>
    <svg class="ml-[14px] h-5 w-[18px]" viewBox="0 0 18 20" fill="none" stroke="#777" stroke-width="1.300"><path d="M9 1q4 3 8 3v6q0 6-8 9-8-3-8-9V4q4 0 8-3zM6 7l6 6M12 7l-6 6"/></svg>
    <span class="ml-[5px]">文档未保护</span>
    <span class="ml-[13px] h-[30px] w-px bg-[#dcdcdc]"></span>
    <span class="ml-[156px] text-[#606060]">96.96</span>
    <div class="ml-auto flex items-center">
      <button aria-label="全屏"><svg class="h-[18px] w-[17px]" viewBox="0 0 17 18" fill="none" stroke="#666" stroke-width="1.300"><path d="M1 6V1h4M16 12v5h-4"/><path d="M11 1h5v5M16 1l-6 6M6 17H1v-5M1 17l6-6" stroke="#5a9e78"/></svg></button>
      <button class="ml-[8px] flex h-[30px] w-[29px] items-center justify-center rounded bg-[#c4c4c4]" aria-label="普通视图"><svg class="h-[18px] w-5" viewBox="0 0 20 18" fill="none" stroke="#444" stroke-width="1.400"><rect x="1" y="1" width="18" height="16" rx="1.500"/><path d="M7 1v16M13 1v16M1 6.500h18M1 11.500h18"/></svg></button>
      <button class="ml-[8px]" aria-label="分页预览"><svg class="h-[18px] w-5" viewBox="0 0 20 18" fill="none" stroke="#555" stroke-width="1.400"><path d="M1 6V3q0-2 2-2h2M8 1h2M16 1h1q2 0 2 2v4M1 10h18M1 13v2q0 2 2 2h2M8 17h2M16 17h1q2 0 2-2v-2M13 1v16"/></svg></button>
      <button class="ml-[12px] flex items-center gap-[3px]" aria-label="页面布局"><svg class="h-5 w-5" viewBox="0 0 20 20" fill="none" stroke="#555" stroke-width="1.400"><rect x="6" y="1" width="8" height="18" rx="1.500"/><path d="M6 6H2.500Q1 6 1 7.500v5Q1 14 2.500 14H6M14 6h3.500Q19 6 19 7.500v5q0 1.500-1.500 1.500H14M6 6h8M6 14h8"/></svg><svg class="h-1 w-1.5"><use href="#caret"/></svg></button>
      <button class="ml-[9px]" aria-label="护眼模式"><svg class="h-5 w-[22px]" viewBox="0 0 22 20" fill="none" stroke="#555" stroke-width="1.400"><path d="M1 13q4-6.500 10-6.500T21 13q-4 6.500-10 6.500T1 13zM11 0v4M3 1l3 4M19 1l-3 4"/><circle cx="11" cy="13" r="3.500"/></svg></button>
      <span class="ml-3 h-[30px] w-px bg-[#dcdcdc]"></span>
      <span class="ml-[11px] text-[#606060]">100%</span><svg class="ml-[6px] h-1 w-1.5"><use href="#caret"/></svg>
      <button class="ml-[14px]" aria-label="缩小"><svg class="h-4 w-[15px]" viewBox="0 0 15 16" stroke="#555" stroke-width="2"><path d="M0 8h15"/></svg></button>
      <input type="range" aria-label="缩放" min="0" max="100" value="49" class="ml-[14px] h-5 w-[172px] appearance-none bg-transparent [&::-webkit-slider-runnable-track]:h-px [&::-webkit-slider-runnable-track]:bg-linear-to-r [&::-webkit-slider-runnable-track]:from-[#666] [&::-webkit-slider-runnable-track]:from-50% [&::-webkit-slider-runnable-track]:to-[#bbb] [&::-webkit-slider-runnable-track]:to-50% [&::-webkit-slider-thumb]:-mt-[7px] [&::-webkit-slider-thumb]:h-[15px] [&::-webkit-slider-thumb]:w-[15px] [&::-webkit-slider-thumb]:appearance-none [&::-webkit-slider-thumb]:rounded-full [&::-webkit-slider-thumb]:border-2 [&::-webkit-slider-thumb]:border-[#666] [&::-webkit-slider-thumb]:bg-[#f4f4f4]">
      <button class="ml-[13px]" aria-label="放大"><svg class="h-4 w-4" viewBox="0 0 16 16" stroke="#555" stroke-width="2"><path d="M8 1v14M0 8h16"/></svg></button>
    </div>
  </footer>

  <!-- Red annotations drawn over the sheet -->
  <div class="pointer-events-none absolute inset-0 text-[23px] leading-10 text-[#ed1c24]">
    <div class="absolute left-[36px] top-[334px] h-[57px] w-[359px] border-5 border-[#ed1c24]"></div>
    <div class="absolute left-[399px] top-[337px] h-[55px] w-[273px] border-5 border-[#ed1c24]"></div>
    <div class="absolute left-[679px] top-[334px] h-[60px] w-[280px] border-5 border-[#ed1c24]"></div>
    <div class="absolute left-[967px] top-[335px] h-[64px] w-[207px] border-5 border-[#ed1c24]"></div>
    <div class="absolute left-[154px] top-[878px] h-[48px] w-[174px] border-5 border-[#ed1c24]"></div>
    <svg class="absolute left-0 top-0 h-full w-full" fill="none" stroke="#ed1c24"><path d="M151 371l31 182M505.500 382v90l-1 90M760 379l44 174M1042 390l43 178"/></svg>
    <p class="absolute left-[119px] top-[553px]">升级的工程名</p>
    <p class="absolute left-[416px] top-[555px]">升级前的框架版本</p>
    <p class="absolute left-[734px] top-[546px] whitespace-nowrap">升级后的.netcore扩<br>展,100表示不用改动<br>任何的API函数</p>
    <p class="absolute left-[1016px] top-[564px] whitespace-nowrap">升级.net5.0后,有<br>96.96%的api函数不<br>用改动</p>
    <p class="absolute left-[173px] top-[843px]">分析的总体报告</p>
  </div>
</div>
</div>
<!-- Edge of the taskbar behind the window -->
<div class="flex h-1 shrink-0 justify-end bg-[#0064ad] pr-[76px]">
  <svg class="h-1 w-[186px]" viewBox="0 0 186 4" fill="none" stroke="#b9b0a6" stroke-width="2"><path d="M0 3h3M58 4l3-3 3 3M168 4V1h5M179 1h6v3"/></svg>
</div>

<script>
  // Blank rows below the report
  const body = document.getElementById('rows');
  for (let n = 12; n <= 27; n++) {
    const tr = document.createElement('tr');
    tr.className = 'h-6';
    tr.innerHTML = '<th>' + n + '</th>' + '<td></td>'.repeat(11);
    body.appendChild(tr);
  }
</script>
</body>
</html>
